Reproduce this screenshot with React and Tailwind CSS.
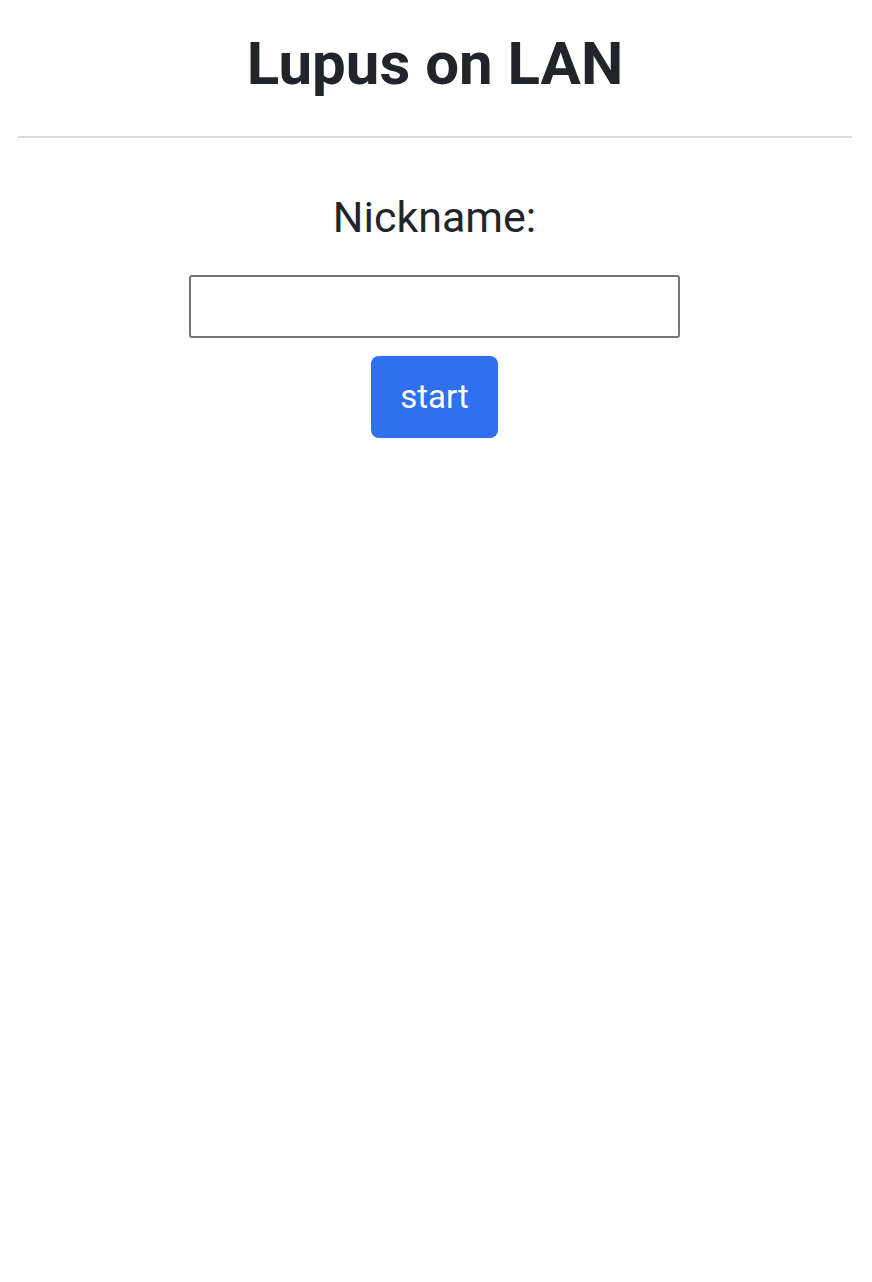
export default function App() {
  return (
    <div className="min-h-screen bg-white font-['Roboto',sans-serif] text-[#212529]">
      <div className="pl-[18px] pr-[20px]">
        <h1 className="pt-[24px] pb-[32px] text-center text-[60px] font-bold leading-[80px]">
          Lupus on LAN
        </h1>
        <hr className="border-0 h-[2px] bg-[#dcdcdc]" />
      </div>

      <div className="flex flex-col items-center pt-[52px] pr-[3px]">
        <label htmlFor="nickname" className="text-[43px] leading-[54px]">
          Nickname:
        </label>
        <input
          id="nickname"
          type="text"
          className="mt-[31px] h-[63px] w-[491px] rounded-[3px] border-2 border-[#767676] bg-white px-3 text-[32px] outline-none"
        />
        <button
          type="button"
          className="mt-[18px] h-[82px] w-[127px] rounded-[8px] bg-[#306ff0] text-[33px] text-white"
        >
          start
        </button>
      </div>
    </div>
  );
}
